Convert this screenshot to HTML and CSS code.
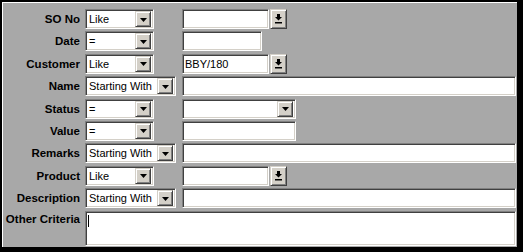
FILE: index.html
```html
<!DOCTYPE html>
<html lang="en">
<head>
    <meta charset="UTF-8">
    <title>Search Criteria</title>
    <link rel="stylesheet" href="styles.css">
</head>
<body>
    <div class="window">
        <div class="panel">
            <div class="criteria">
                <!-- SO No -->
                <span class="lbl">SO No</span>
                <div class="select sel-short"><span class="val">Like</span><span class="drop"><svg width="7" height="4" viewBox="0 0 7 4"><polygon points="0,0 7,0 3.5,4"/></svg></span></div>
                <div class="combo">
                    <div class="field fld-combo"></div>
                    <span class="pick"><svg width="7" height="10" viewBox="0 0 7 10"><rect x="2" y="0" width="3" height="3"/><polygon points="0,3 7,3 3.5,6.5"/><rect x="0" y="8" width="7" height="1.5"/></svg></span>
                </div>

                <!-- Date -->
                <span class="lbl">Date</span>
                <div class="select sel-short"><span class="val">=</span><span class="drop"><svg width="7" height="4" viewBox="0 0 7 4"><polygon points="0,0 7,0 3.5,4"/></svg></span></div>
                <div class="combo">
                    <div class="field fld-date"></div>
                </div>

                <!-- Customer -->
                <span class="lbl">Customer</span>
                <div class="select sel-short"><span class="val">Like</span><span class="drop"><svg width="7" height="4" viewBox="0 0 7 4"><polygon points="0,0 7,0 3.5,4"/></svg></span></div>
                <div class="combo">
                    <div class="field fld-combo"><span class="val">BBY/180</span></div>
                    <span class="pick"><svg width="7" height="10" viewBox="0 0 7 10"><rect x="2" y="0" width="3" height="3"/><polygon points="0,3 7,3 3.5,6.5"/><rect x="0" y="8" width="7" height="1.5"/></svg></span>
                </div>

                <!-- Name -->
                <span class="lbl">Name</span>
                <div class="select sel-long"><span class="val">Starting With</span><span class="drop"><svg width="7" height="4" viewBox="0 0 7 4"><polygon points="0,0 7,0 3.5,4"/></svg></span></div>
                <div class="field fld-full"></div>

                <!-- Status -->
                <span class="lbl">Status</span>
                <div class="select sel-short"><span class="val">=</span><span class="drop"><svg width="7" height="4" viewBox="0 0 7 4"><polygon points="0,0 7,0 3.5,4"/></svg></span></div>
                <div class="combo">
                    <div class="select sel-status"><span class="val"></span><span class="drop"><svg width="7" height="4" viewBox="0 0 7 4"><polygon points="0,0 7,0 3.5,4"/></svg></span></div>
                </div>

                <!-- Value -->
                <span class="lbl">Value</span>
                <div class="select sel-short"><span class="val">=</span><span class="drop"><svg width="7" height="4" viewBox="0 0 7 4"><polygon points="0,0 7,0 3.5,4"/></svg></span></div>
                <div class="combo">
                    <div class="field fld-value"></div>
                </div>

                <!-- Remarks -->
                <span class="lbl">Remarks</span>
                <div class="select sel-long"><span class="val">Starting With</span><span class="drop"><svg width="7" height="4" viewBox="0 0 7 4"><polygon points="0,0 7,0 3.5,4"/></svg></span></div>
                <div class="field fld-full"></div>

                <!-- Product -->
                <span class="lbl">Product</span>
                <div class="select sel-short"><span class="val">Like</span><span class="drop"><svg width="7" height="4" viewBox="0 0 7 4"><polygon points="0,0 7,0 3.5,4"/></svg></span></div>
                <div class="combo">
                    <div class="field fld-combo"></div>
                    <span class="pick"><svg width="7" height="10" viewBox="0 0 7 10"><rect x="2" y="0" width="3" height="3"/><polygon points="0,3 7,3 3.5,6.5"/><rect x="0" y="8" width="7" height="1.5"/></svg></span>
                </div>

                <!-- Description -->
                <span class="lbl">Description</span>
                <div class="select sel-long"><span class="val">Starting With</span><span class="drop"><svg width="7" height="4" viewBox="0 0 7 4"><polygon points="0,0 7,0 3.5,4"/></svg></span></div>
                <div class="field fld-full"></div>

                <!-- Other Criteria -->
                <span class="lbl lbl-top">Other Criteria</span>
                <div class="field memo"><span class="caret"></span></div>
            </div>
        </div>
    </div>
</body>
</html>
```

FILE: styles.css
```css
html, body {
    margin: 0;
    padding: 0;
    background: #000;
}

body {
    font-family: 'Liberation Sans', Arial, sans-serif;
    font-size: 11px;
    color: #000;
}

.window {
    width: 523px;
    height: 252px;
    box-sizing: border-box;
    padding: 2px 6px 5px 2px;
    background: #000;
}

.panel {
    height: 100%;
    box-sizing: border-box;
    background: #a8a8a8;
    border-top: 1px solid #fff;
    border-left: 1px solid #fff;
    padding: 6px 1px 0 0;
}

.criteria {
    display: grid;
    grid-template-columns: 77px 92px 1fr;
    grid-auto-rows: 20px;
    grid-template-rows: repeat(9, 20px) 35px;
    column-gap: 5px;
    row-gap: 2.4px;
}

.lbl {
    font-weight: bold;
    font-size: 11.5px;
    text-align: right;
    align-self: center;
    white-space: nowrap;
    line-height: 14px;
}

.lbl-top {
    align-self: start;
    padding-top: 1px;
}

/* sunken 3d box used by selects and text fields */
.field,
.select {
    box-sizing: border-box;
    height: 20px;
    background: #fff;
    border-style: solid;
    border-width: 1px;
    border-color: #808080 #fff #fff #808080;
    box-shadow: inset 1px 1px #404040, inset -1px -1px #d4d0c8;
    display: flex;
    align-items: center;
}

.select {
    padding: 2px 2px 2px 3px;
}

.field {
    padding: 0 2px;
}

.val {
    flex: 1;
    white-space: nowrap;
    overflow: hidden;
    line-height: 14px;
}

.drop {
    width: 16px;
    height: 16px;
    box-sizing: border-box;
    background: #d4d0c8;
    border-style: solid;
    border-width: 1px;
    border-color: #d4d0c8 #404040 #404040 #d4d0c8;
    box-shadow: inset 1px 1px #fff, inset -1px -1px #808080;
    display: flex;
    align-items: center;
    justify-content: center;
    padding-top: 1px;
}

.drop svg,
.pick svg {
    display: block;
    fill: #000;
}

.sel-short { width: 69px; }
.sel-long { width: 91px; }
.sel-status { width: 114px; }

.combo {
    display: flex;
    gap: 1px;
}

.fld-combo { width: 87px; }
.fld-date { width: 80px; }
.fld-value { width: 114px; }

.pick {
    width: 17px;
    height: 20px;
    box-sizing: border-box;
    background: #d4d0c8;
    border-style: solid;
    border-width: 1px;
    border-color: #d4d0c8 #404040 #404040 #d4d0c8;
    box-shadow: inset 1px 1px #fff, inset -1px -1px #808080;
    display: flex;
    align-items: center;
    justify-content: center;
}

.memo {
    grid-column: 2 / 4;
    height: 35px;
    align-items: flex-start;
    padding: 3px 2px;
}

.caret {
    display: block;
    width: 1px;
    height: 12px;
    background: #000;
}
```
